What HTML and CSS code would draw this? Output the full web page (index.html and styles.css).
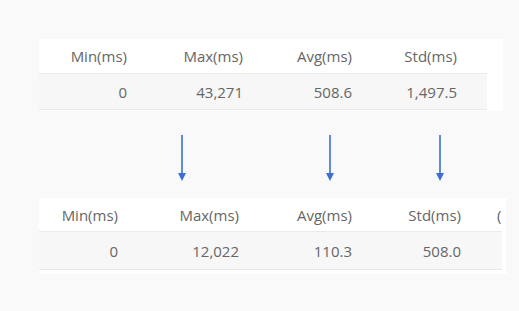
FILE: index.html
```html
<!DOCTYPE html>
<html>
<head>
<meta charset="utf-8">
<link rel="stylesheet" href="styles.css">
</head>
<body>
<div class="page">
  <div class="panel panel-top">
    <div class="grid grid-top">
      <div class="th">Min(ms)</div>
      <div class="th">Max(ms)</div>
      <div class="th">Avg(ms)</div>
      <div class="th">Std(ms)</div>
      <div class="th"></div>
      <div class="td">0</div>
      <div class="td">43,271</div>
      <div class="td">508.6</div>
      <div class="td">1,497.5</div>
      <div class="td"></div>
    </div>
  </div>

  <div class="arrows">
    <svg class="arrow a1" width="10" height="47" viewBox="0 0 10 47"><line x1="5" y1="0" x2="5" y2="40" stroke="#3b6fd1" stroke-width="1.6"/><path d="M1 38 L9 38 L5 46 Z" fill="#3b6fd1"/></svg>
    <svg class="arrow a2" width="10" height="47" viewBox="0 0 10 47"><line x1="5" y1="0" x2="5" y2="40" stroke="#3b6fd1" stroke-width="1.6"/><path d="M1 38 L9 38 L5 46 Z" fill="#3b6fd1"/></svg>
    <svg class="arrow a3" width="10" height="47" viewBox="0 0 10 47"><line x1="5" y1="0" x2="5" y2="40" stroke="#3b6fd1" stroke-width="1.6"/><path d="M1 38 L9 38 L5 46 Z" fill="#3b6fd1"/></svg>
  </div>

  <div class="panel panel-bottom">
    <div class="grid grid-bottom">
      <div class="th">Min(ms)</div>
      <div class="th">Max(ms)</div>
      <div class="th">Avg(ms)</div>
      <div class="th">Std(ms)</div>
      <div class="th cut">(</div>
      <div class="td">0</div>
      <div class="td">12,022</div>
      <div class="td">110.3</div>
      <div class="td">508.0</div>
      <div class="td"></div>
    </div>
  </div>
</div>
</body>
</html>
```

FILE: styles.css
```css
html, body {
  margin: 0;
  padding: 0;
  background: #f9f9f9;
}
body {
  font-family: "Open Sans", "Liberation Sans", sans-serif;
  font-size: 15px;
  color: #666666;
  width: 519px;
  height: 311px;
  overflow: hidden;
}
.page {
  padding: 39px 0 0 39px;
}
.panel {
  background: #ffffff;
}
.panel-top {
  width: 464px;
  padding-bottom: 1px;
}
.panel-bottom {
  width: 467px;
  padding-bottom: 4px;
}
.grid {
  display: grid;
}
.grid-top {
  width: 448px;
  grid-template-columns: 88px 116px 109px 105px 30px;
  grid-template-rows: 35px 36px;
}
.grid-bottom {
  width: 463px;
  grid-template-columns: 79px 121px 113px 109px 41px;
  grid-template-rows: 34px 38px;
}
.th, .td {
  display: flex;
  align-items: center;
  justify-content: flex-end;
  white-space: nowrap;
  overflow: hidden;
}
.th {
  border-bottom: 1px solid #ebebeb;
}
.td {
  background: #f7f7f7;
  border-bottom: 1px solid #e9e9e9;
}
.th.cut {
  justify-content: flex-start;
  padding-left: 36px;
}
.arrows {
  display: flex;
  padding: 24px 0 0 138px;
  box-sizing: border-box;
  height: 87px;
}
.arrow {
  display: block;
}
.a2 { margin-left: 138px; }
.a3 { margin-left: 100px; }
```
